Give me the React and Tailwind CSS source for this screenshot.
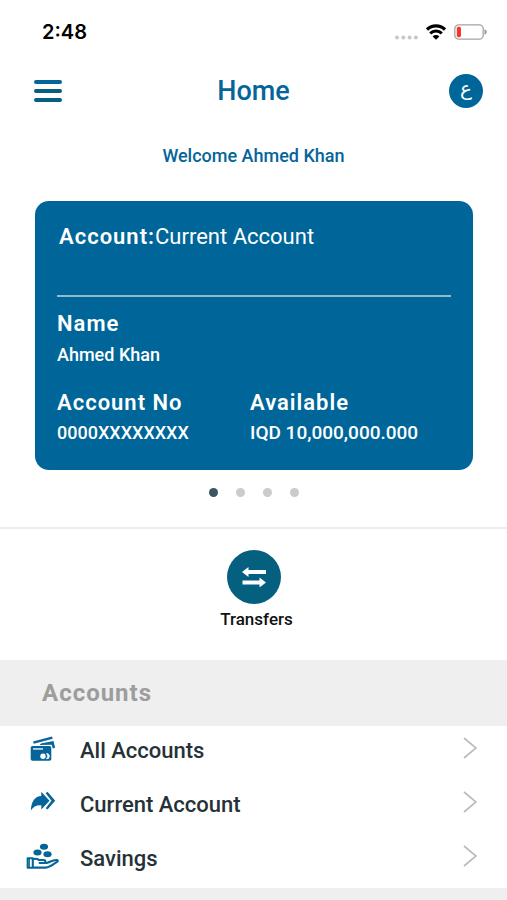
import React from "react";

function StatusBar() {
  return (
    <div className="flex h-16 items-center justify-between pr-5 pl-[42px]">
      <span className="font-[Inter,sans-serif] text-xl font-semibold text-black">2:48</span>
      <div className="flex items-center gap-2">
        <svg viewBox="0 0 23 5" className="mt-2.5 h-[5px] w-[23px] fill-[#c8c8c8]" aria-label="No signal">
          <circle cx="2" cy="2.5" r="2" />
          <circle cx="8.3" cy="2.5" r="2" />
          <circle cx="14.6" cy="2.5" r="2" />
          <circle cx="20.9" cy="2.5" r="2" />
        </svg>
        <svg viewBox="0 0 20 16" className="h-4 w-5 fill-none stroke-black" aria-label="Wi-Fi">
          <path d="M1 5.6a12.8 12.8 0 0 1 18 0" strokeWidth="3.2" />
          <path d="M4.2 9.4a8.2 8.2 0 0 1 11.600 0" strokeWidth="3" />
          <path d="M10 15.700 6.600 12.500a4.800 4.800 0 0 1 6.800 0Z" className="fill-black" stroke="none" />
        </svg>
        <svg viewBox="0 0 33 16" className="h-4 w-[33px]" aria-label="Battery low">
          <rect x="0.8" y="0.8" width="28.4" height="14.4" rx="4" fill="#fff" stroke="#a3a3a3" strokeWidth="1.3" />
          <rect x="2.8" y="2.8" width="4.2" height="10.4" rx="1.6" fill="#f8352c" />
          <path d="M30.5 5.5c1.5.3 2.2 1.2 2.2 2.5s-.7 2.2-2.2 2.5z" fill="#999" />
        </svg>
      </div>
    </div>
  );
}

function CardsIcon() {
  return (
    <svg viewBox="0 0 34 30" className="mb-1 h-[30px] w-[34px] fill-[#05659a]" aria-hidden="true">
      <path d="M7 7.400 26 2.500l.8 2.200L7.800 9.800z" />
      <path d="m15 9.600 12.500-2.600 1.600 6.800-2.200.6-1.300-3.600-12 .1z" />
      <path d="M6.5 12h17a1.8 1.8 0 0 1 1.8 1.8V25a1.8 1.8 0 0 1-1.8 1.8h-17A1.8 1.8 0 0 1 4.700 25V13.800a1.800 1.800 0 0 1 1.800-1.800z" />
      <path d="M7 14.300h10v1.300H7z" fill="#fff" />
      <circle cx="17" cy="22.200" r="2.700" fill="#fff" />
      <path d="M20.600 19.500a2.700 2.700 0 0 1 0 5.400 4 4 0 0 0 0-5.400z" fill="#fff" stroke="#fff" strokeWidth=".8" />
    </svg>
  );
}

function ForwardIcon() {
  return (
    <svg viewBox="0 0 34 30" className="mb-1 h-[30px] w-[34px] fill-[#05659a]" aria-hidden="true">
      <path d="M4.800 22.500C5.500 12.500 9 8.500 15.300 8V3.800l8.200 9-8.200 8.700v-4.300C10.500 16.800 7.500 18.500 4.800 22.500z" />
      <path d="m21.500 3.800 7.700 9-7.700 8.800-1.800-1.400 5.800-7.400-5.800-7.500z" />
    </svg>
  );
}

function SavingsIcon() {
  return (
    <svg viewBox="0 0 34 30" className="mb-1 h-[30px] w-[34px] fill-[#05659a]" aria-hidden="true">
      <ellipse cx="18" cy="4.700" rx="4.100" ry="3" />
      <ellipse cx="11.500" cy="10.600" rx="4.100" ry="3" />
      <ellipse cx="21.500" cy="12.200" rx="4.100" ry="3" />
      <path
        d="M1.700 16.300h5.100v9.500H1.700zM6.800 17.300c3.200-1.300 4.500-.3 6.400.7h4.600c2 0 2.100 2.300.3 2.700l-4.500.3h6.600c3-.2 6-3.400 10.800-3 1.200.3.900 1.400.1 1.900-4 2.400-7.400 5.700-11.100 5.700H6.800"
        fill="none"
        stroke="#05659a"
        strokeWidth="2.100"
        strokeLinejoin="round"
      />
      <path d="M3.300 17v8" stroke="#05659a" strokeWidth="1.200" />
    </svg>
  );
}

const accounts = [
  { label: "All Accounts", Icon: CardsIcon },
  { label: "Current Account", Icon: ForwardIcon },
  { label: "Savings", Icon: SavingsIcon },
];

export default function App() {
  return (
    <div className="flex min-h-screen flex-col bg-white font-[Roboto,sans-serif] font-medium">
      <StatusBar />

      <header className="flex h-[54px] items-center justify-between pr-6 pl-[34px]">
        <button type="button" aria-label="Menu" className="flex w-[34px] flex-col gap-[5px]">
          <span className="h-1 w-7 rounded-full bg-[#05659a]" />
          <span className="h-1 w-7 rounded-full bg-[#055f7d]" />
          <span className="h-1 w-7 rounded-full bg-[#055f7d]" />
        </button>
        <h1 className="pr-2.5 text-[27px] text-[#05659a]">Home</h1>
        <button
          type="button"
          aria-label="العربية"
          className="flex size-[34px] items-center justify-center rounded-full bg-[#006699] font-['DejaVu_Sans',sans-serif] text-xl leading-none font-normal text-white"
        >
          <span className="pb-1.5">ع</span>
        </button>
      </header>

      <main className="flex grow flex-col">
        <p className="mt-[26px] text-center text-lg leading-6 text-[#05659a]">Welcome Ahmed Khan</p>

        <section className="mt-[33px] mr-[34px] ml-[35px] rounded-[14px] bg-[#006699] px-[22px] pt-5 pb-[25px] text-white">
          <h2 className="flex pl-0.5 text-[22px] leading-8">
            <span className="font-semibold tracking-[1px]">Account:</span>
            <span className="font-normal">Current Account</span>
          </h2>
          <hr className="mt-[42px] border-0 border-t-2 border-[#8fbad0]" />
          <dl className="mt-[13px] grid grid-cols-[193px_1fr]">
            <div className="col-span-2">
              <dt className="text-[22px] leading-7 font-semibold tracking-[1px]">Name</dt>
              <dd className="mt-[5px] text-lg leading-6">Ahmed Khan</dd>
            </div>
            <div className="mt-[22px]">
              <dt className="text-[22px] leading-7 font-semibold tracking-[1px]">Account No</dt>
              <dd className="mt-1 text-lg leading-6">0000XXXXXXXX</dd>
            </div>
            <div className="mt-[22px]">
              <dt className="text-[22px] leading-7 font-semibold tracking-[1px]">Available</dt>
              <dd className="mt-1 text-[19px] leading-6">IQD 10,000,000.000</dd>
            </div>
          </dl>
        </section>

        <div className="mt-[18px] flex justify-center gap-[18px]">
          <button type="button" aria-label="Card 1" className="size-[9px] rounded-full bg-[#3d5561]" />
          <button type="button" aria-label="Card 2" className="size-[9px] rounded-full bg-[#c8cccb]" />
          <button type="button" aria-label="Card 3" className="size-[9px] rounded-full bg-[#c8cccb]" />
          <button type="button" aria-label="Card 4" className="size-[9px] rounded-full bg-[#c8cccb]" />
        </div>

        <div className="mt-[30px] flex justify-center border-t-2 border-[#ececec] pt-[21px] pb-[29px]">
          <button type="button" className="flex flex-col items-center gap-[3px] text-[#111]">
            <span className="flex size-[54px] items-center justify-center rounded-full bg-[#05607f]">
              <svg viewBox="0 0 24 20" className="h-5 w-6 fill-white" aria-hidden="true">
                <path d="M0 5 6.500 0v3H24v4H6.500v3z" />
                <path d="M24 15.500 17.500 10.500v3H.5v4h17v3z" />
              </svg>
            </span>
            <span className="pl-1.5 text-[17px] leading-6">Transfers</span>
          </button>
        </div>

        <h2 className="bg-[#efefef] pl-[42px] text-2xl leading-[66px] font-bold tracking-[1px] text-[#9d9d9d]">
          Accounts
        </h2>
        <ul>
          {accounts.map(({ label, Icon }) => (
            <li key={label}>
              <a href="#" className="flex h-[54px] items-center pr-[30px] pb-[5px] pl-[26px] text-[22px] leading-8 text-[#263238]">
                <Icon />
                <span className="grow pl-5">{label}</span>
                <svg viewBox="0 0 14 22" className="mb-1.5 h-[22px] w-3.5 fill-none stroke-[#bdbdbd]" aria-hidden="true">
                  <path d="M1 1 13 11 1 21" strokeWidth="1.800" />
                </svg>
              </a>
            </li>
          ))}
        </ul>
        <div className="min-h-3 grow bg-[#efefef]" />
      </main>
    </div>
  );
}
